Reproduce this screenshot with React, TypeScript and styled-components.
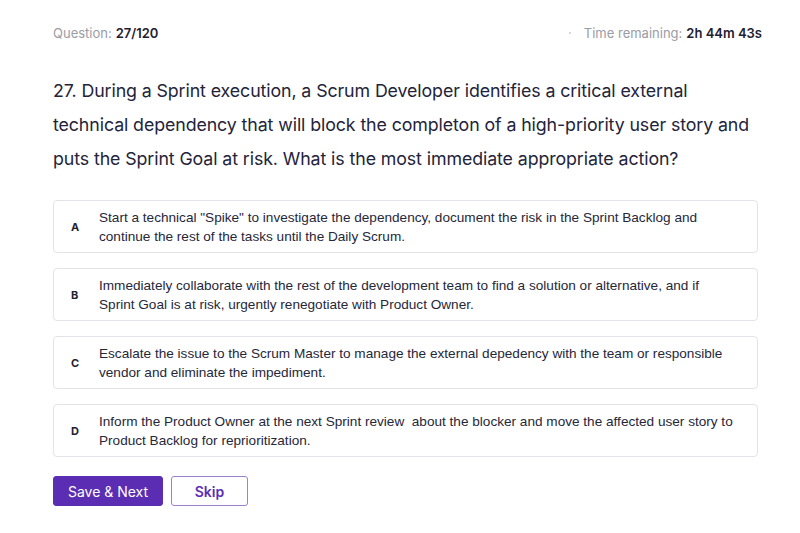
import React, { FC } from 'react'
import styled, { createGlobalStyle } from 'styled-components'

const GlobalStyle = createGlobalStyle`
  html, body {
    margin: 0;
    padding: 0;
    background: #ffffff;
  }
  body {
    font-family: Inter, "Noto Sans", "Liberation Sans", sans-serif;
    color: #1f2130;
  }
`

const Page = styled.div`
  width: 800px;
  height: 533px;
  box-sizing: border-box;
  padding: 24px 42px 0 53px;
  display: flex;
  flex-direction: column;
`

const TopBar = styled.div`
  display: flex;
  justify-content: space-between;
  align-items: center;
  height: 17px;
  font-size: 13px;
  margin-right: -4px;
`

const Meta = styled.span`
  color: #9a9ca6;
  display: flex;
  align-items: center;
`

const MetaValue = styled.b`
  color: #1f2130;
  font-weight: 600;
  margin-left: 4px;
`

const Dot = styled.span`
  width: 2px;
  height: 2px;
  border-radius: 50%;
  background: #c8c9d0;
  margin-right: 13px;
`

const QuestionText = styled.h1`
  margin: 33px 0 0;
  font-size: 17.8px;
  font-weight: 400;
  line-height: 34px;
  color: #23243a;
  letter-spacing: -0.1px;
`

const Options = styled.div`
  margin-top: 24px;
  display: flex;
  flex-direction: column;
  gap: 15px;
`

const Option = styled.div`
  display: flex;
  align-items: center;
  min-height: 53px;
  box-sizing: border-box;
  border: 1px solid #e3e4ea;
  border-radius: 4px;
  padding: 6px 22px 6px 16px;
  background: #fff;
`

const Letter = styled.span`
  width: 28px;
  flex: none;
  font-size: 11px;
  font-weight: 700;
  color: #1f2130;
  padding-left: 1px;
`

const OptionText = styled.span`
  font-family: "Liberation Sans", Arial, sans-serif;
  font-size: 13.6px;
  line-height: 19px;
  color: #26273a;
  white-space: pre-wrap;
`

const Actions = styled.div`
  margin-top: 19px;
  display: flex;
  gap: 8px;
`

const Button = styled.button<{ $primary?: boolean }>`
  height: 30px;
  box-sizing: border-box;
  border-radius: 3px;
  font-family: inherit;
  font-size: 14px;
  cursor: pointer;
  padding: 0;
  width: ${(p) => (p.$primary ? '110px' : '77px')};
  background: ${(p) => (p.$primary ? '#5b2db3' : '#fff')};
  color: ${(p) => (p.$primary ? '#ffffff' : '#5b2db3')};
  border: 1px solid ${(p) => (p.$primary ? '#5b2db3' : '#9a82cf')};
  font-weight: ${(p) => (p.$primary ? 400 : 600)};
`

const options: { key: string; text: string }[] = [
  {
    key: 'A',
    text: 'Start a technical "Spike" to investigate the dependency, document the risk in the Sprint Backlog and continue the rest of the tasks until the Daily Scrum.',
  },
  {
    key: 'B',
    text: 'Immediately collaborate with the rest of the development team to find a solution or alternative, and if Sprint Goal is at risk, urgently renegotiate with Product Owner.',
  },
  {
    key: 'C',
    text: 'Escalate the issue to the Scrum Master to manage the external depedency with the team or responsible vendor and eliminate the impediment.',
  },
  {
    key: 'D',
    text: 'Inform the Product Owner at the next Sprint review  about the blocker and move the affected user story to Product Backlog for reprioritization.',
  },
]

const App: FC = () => (
  <>
    <GlobalStyle />
    <Page>
      <TopBar>
        <Meta>
          Question:<MetaValue>27/120</MetaValue>
        </Meta>
        <Meta>
          <Dot />
          Time remaining:<MetaValue>2h 44m 43s</MetaValue>
        </Meta>
      </TopBar>
      <QuestionText>
        27. During a Sprint execution, a Scrum Developer identifies a critical external technical
        dependency that will block the completon of a high-priority user story and puts the Sprint
        Goal at risk. What is the most immediate appropriate action?
      </QuestionText>
      <Options>
        {options.map((o) => (
          <Option key={o.key}>
            <Letter>{o.key}</Letter>
            <OptionText>{o.text}</OptionText>
          </Option>
        ))}
      </Options>
      <Actions>
        <Button $primary>Save &amp; Next</Button>
        <Button>Skip</Button>
      </Actions>
    </Page>
  </>
)

export default App
